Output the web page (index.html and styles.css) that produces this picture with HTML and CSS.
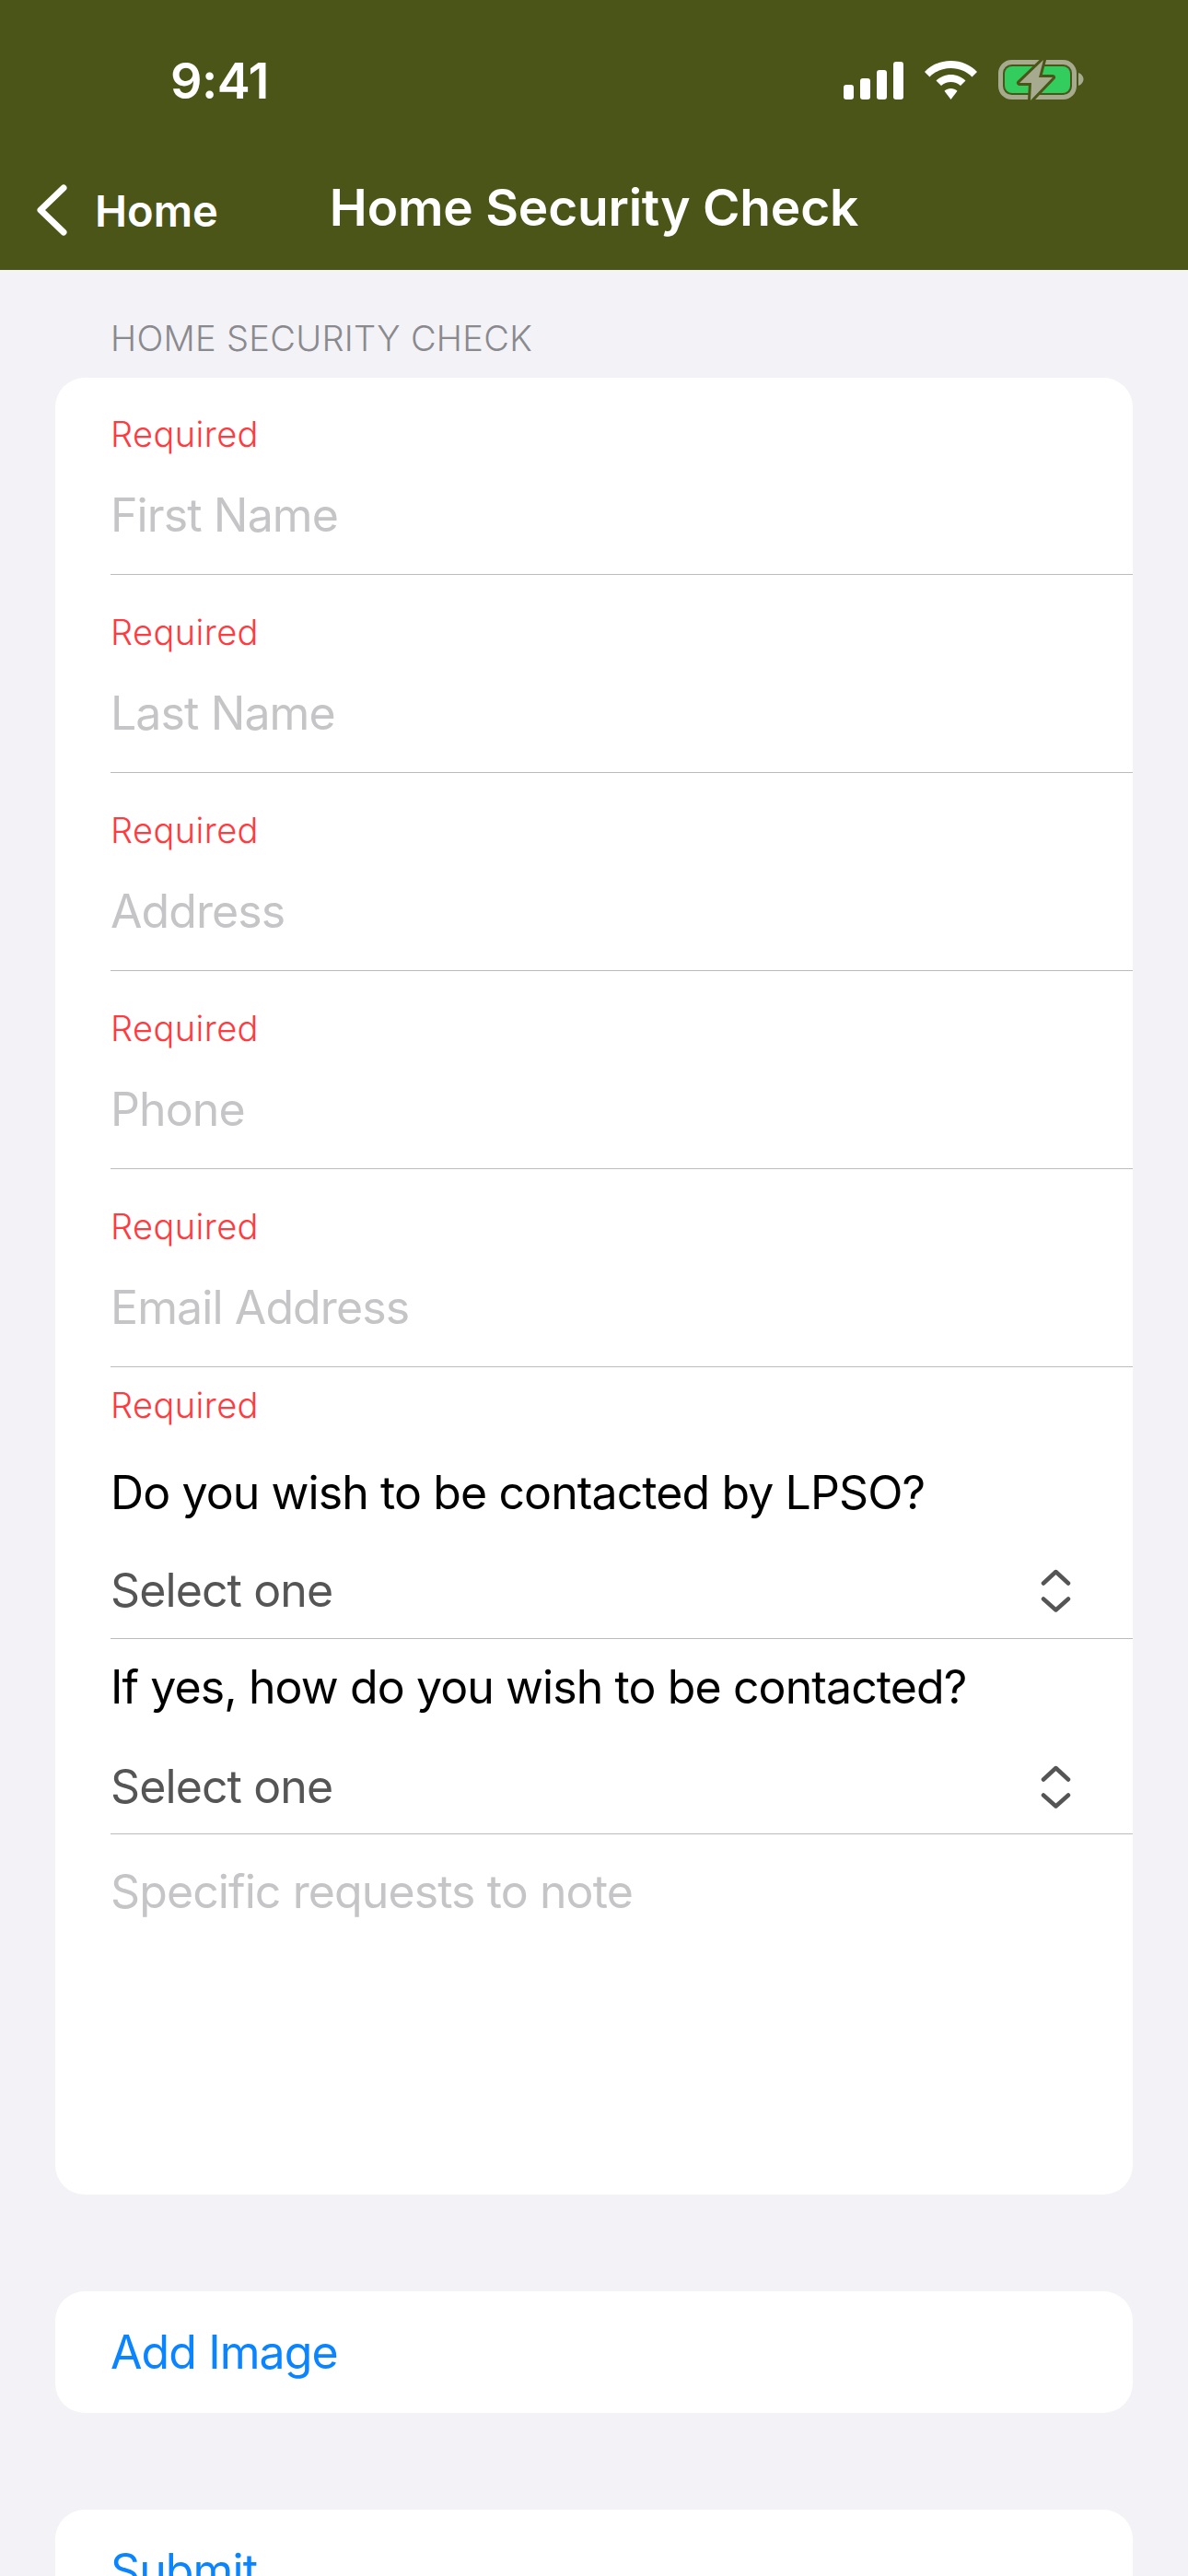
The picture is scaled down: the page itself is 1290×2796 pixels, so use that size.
FILE: index.html
```html
<!DOCTYPE html>
<html lang="en">
<head>
  <meta charset="UTF-8" />
  <meta name="viewport" content="width=device-width, initial-scale=1.0"/>
  <title>Home Security Check</title>
  <link rel="stylesheet" href="styles.css">
</head>
<body>
  <header class="top-bar">
    <div class="status-bar">
      <span class="clock">9:41</span>
      <div class="status-icons">
        <svg class="icon-signal" width="65" height="41" viewBox="0 0 65 41" fill="#fff">
          <rect x="0" y="25" width="11" height="16" rx="3"/>
          <rect x="18" y="18" width="11" height="23" rx="3"/>
          <rect x="36" y="9" width="11" height="32" rx="3"/>
          <rect x="54" y="0" width="11" height="41" rx="3"/>
        </svg>
        <svg class="icon-wifi" width="57" height="42" viewBox="0 0 57 42" fill="#fff">
          <path d="M28.5 0C40 0 50 4.500 57 12L51.500 17.500C45.500 11.500 37.500 8 28.500 8C19.500 8 11.500 11.500 5.500 17.500L0 12C7 4.500 17 0 28.500 0Z"/>
          <path d="M28.500 15C34.500 15 40 17.500 44.500 21.500L39 27C36 24.500 32.500 23 28.500 23C24.500 23 21 24.500 18 27L12.500 21.500C17 17.500 22.500 15 28.500 15Z"/>
          <path d="M28.500 30C31 30 33.500 31 35.500 32.800L28.500 42L21.500 32.800C23.500 31 26 30 28.500 30Z"/>
        </svg>
        <svg class="icon-battery" width="93" height="46" viewBox="0 0 93 46">
          <rect x="2.500" y="3.500" width="80" height="38" rx="12" fill="none" stroke="#a6ab90" stroke-width="5"/>
          <rect x="7" y="8" width="71" height="29" rx="8" fill="#32cd5c"/>
          <path d="M87 15C90 16 92.500 19 92.500 22C92.500 25 90 28 87 29Z" fill="#a6ab90"/>
          <path d="M49 1L23 26H36L35 45L59 20H44Z" fill="#a6ab90" stroke="#4b5518" stroke-width="6" stroke-linejoin="round" paint-order="stroke"/>
        </svg>
      </div>
    </div>
    <nav class="nav-bar">
      <div class="back-link">
        <svg width="33" height="56" viewBox="0 0 33 56" fill="none" stroke="#fff" stroke-width="7" stroke-linecap="round" stroke-linejoin="round">
          <path d="M29 4L4 28L29 52"/>
        </svg>
        <span>Home</span>
      </div>
      <h1>Home Security Check</h1>
    </nav>
  </header>

  <main class="content">
    <h2 class="section-label">HOME SECURITY CHECK</h2>

    <section class="card form-card">
      <div class="field">
        <div class="required">Required</div>
        <div class="placeholder">First Name</div>
      </div>
      <div class="field">
        <div class="required">Required</div>
        <div class="placeholder">Last Name</div>
      </div>
      <div class="field">
        <div class="required">Required</div>
        <div class="placeholder">Address</div>
      </div>
      <div class="field">
        <div class="required">Required</div>
        <div class="placeholder">Phone</div>
      </div>
      <div class="field">
        <div class="required">Required</div>
        <div class="placeholder">Email Address</div>
      </div>
      <div class="picker picker-required">
        <div class="required">Required</div>
        <div class="question">Do you wish to be contacted by LPSO?</div>
        <div class="select-row">
          <span>Select one</span>
          <svg width="33" height="47" viewBox="0 0 33 47" fill="none" stroke="#555" stroke-width="4.500" stroke-linecap="round" stroke-linejoin="round">
            <path d="M3 15.500L16.500 3L30 15.500"/>
            <path d="M3 32.500L16.500 44.500L30 32.500"/>
          </svg>
        </div>
      </div>
      <div class="picker">
        <div class="question">If yes, how do you wish to be contacted?</div>
        <div class="select-row">
          <span>Select one</span>
          <svg width="33" height="47" viewBox="0 0 33 47" fill="none" stroke="#555" stroke-width="4.500" stroke-linecap="round" stroke-linejoin="round">
            <path d="M3 15.500L16.500 3L30 15.500"/>
            <path d="M3 32.500L16.500 44.500L30 32.500"/>
          </svg>
        </div>
      </div>
      <div class="notes">
        <div class="placeholder">Specific requests to note</div>
      </div>
    </section>

    <section class="card action-card">Add Image</section>
    <section class="card action-card">Submit</section>
  </main>
</body>
</html>
```

FILE: styles.css
```css
html, body {
  margin: 0;
  height: 2796px;
  overflow: hidden;
}

body {
  font-family: Inter, "Liberation Sans", sans-serif;
  background-color: #f2f2f7;
  color: #000;
}

/* Header */
.top-bar {
  height: 293px;
  background-color: #4b5518;
  color: #fff;
}

.status-bar {
  height: 174px;
  display: flex;
  justify-content: space-between;
  align-items: center;
  padding: 0 113px 0 185px;
}

.clock {
  font-size: 54px;
  font-weight: 600;
  letter-spacing: -0.5px;
}

.status-icons {
  display: flex;
  align-items: center;
  gap: 23px;
}

.nav-bar {
  display: grid;
  grid-template-columns: 1fr auto 1fr;
  align-items: center;
  height: 102px;
}

.back-link {
  display: flex;
  align-items: center;
  gap: 30px;
  padding: 6px 0 0 40px;
  font-size: 47px;
  font-weight: 600;
}

.nav-bar h1 {
  margin: 0;
  grid-column: 2;
  font-size: 55px;
  font-weight: 600;
  letter-spacing: -0.2px;
}

/* Form */
.content {
  padding: 0 60px;
}

.section-label {
  height: 65px;
  margin: 0;
  padding: 52px 0 0 60px;
  font-size: 38px;
  line-height: 44px;
  font-weight: 300;
  letter-spacing: 0.3px;
  color: #8a8a8e;
}

.card {
  background: #fff;
  border-radius: 32px;
}

.form-card {
  height: 1972px;
  padding-left: 60px;
}

.required {
  font-size: 38px;
  line-height: 44px;
  font-weight: 300;
  letter-spacing: 0.4px;
  color: #ff3b3f;
}

.placeholder, .question, .select-row {
  font-size: 50px;
  line-height: 62px;
  letter-spacing: -0.9px;
}

.placeholder {
  color: #c5c5c7;
}

.field {
  padding-top: 39px;
  padding-bottom: 33px;
  border-bottom: 1px solid #bcbcbe;
}

.field + .field {
  padding-top: 40px;
}

.field .placeholder {
  margin-top: 35px;
}

.picker {
  padding-top: 21px;
  border-bottom: 1px solid #bcbcbe;
}

.picker-required {
  padding-top: 19px;
}

.picker-required .question {
  margin-top: 42px;
}

.select-row {
  display: flex;
  justify-content: space-between;
  align-items: center;
  margin-top: 44px;
  padding: 0 67px 21px 0;
  color: #555;
}

.picker + .picker .select-row {
  margin-top: 46px;
  padding-bottom: 20px;
}

.notes {
  padding-top: 31px;
}

.action-card {
  display: flex;
  align-items: center;
  height: 132px;
  margin-top: 105px;
  padding-left: 60px;
  font-size: 50px;
  letter-spacing: -0.9px;
  color: #0a84ff;
}
```
